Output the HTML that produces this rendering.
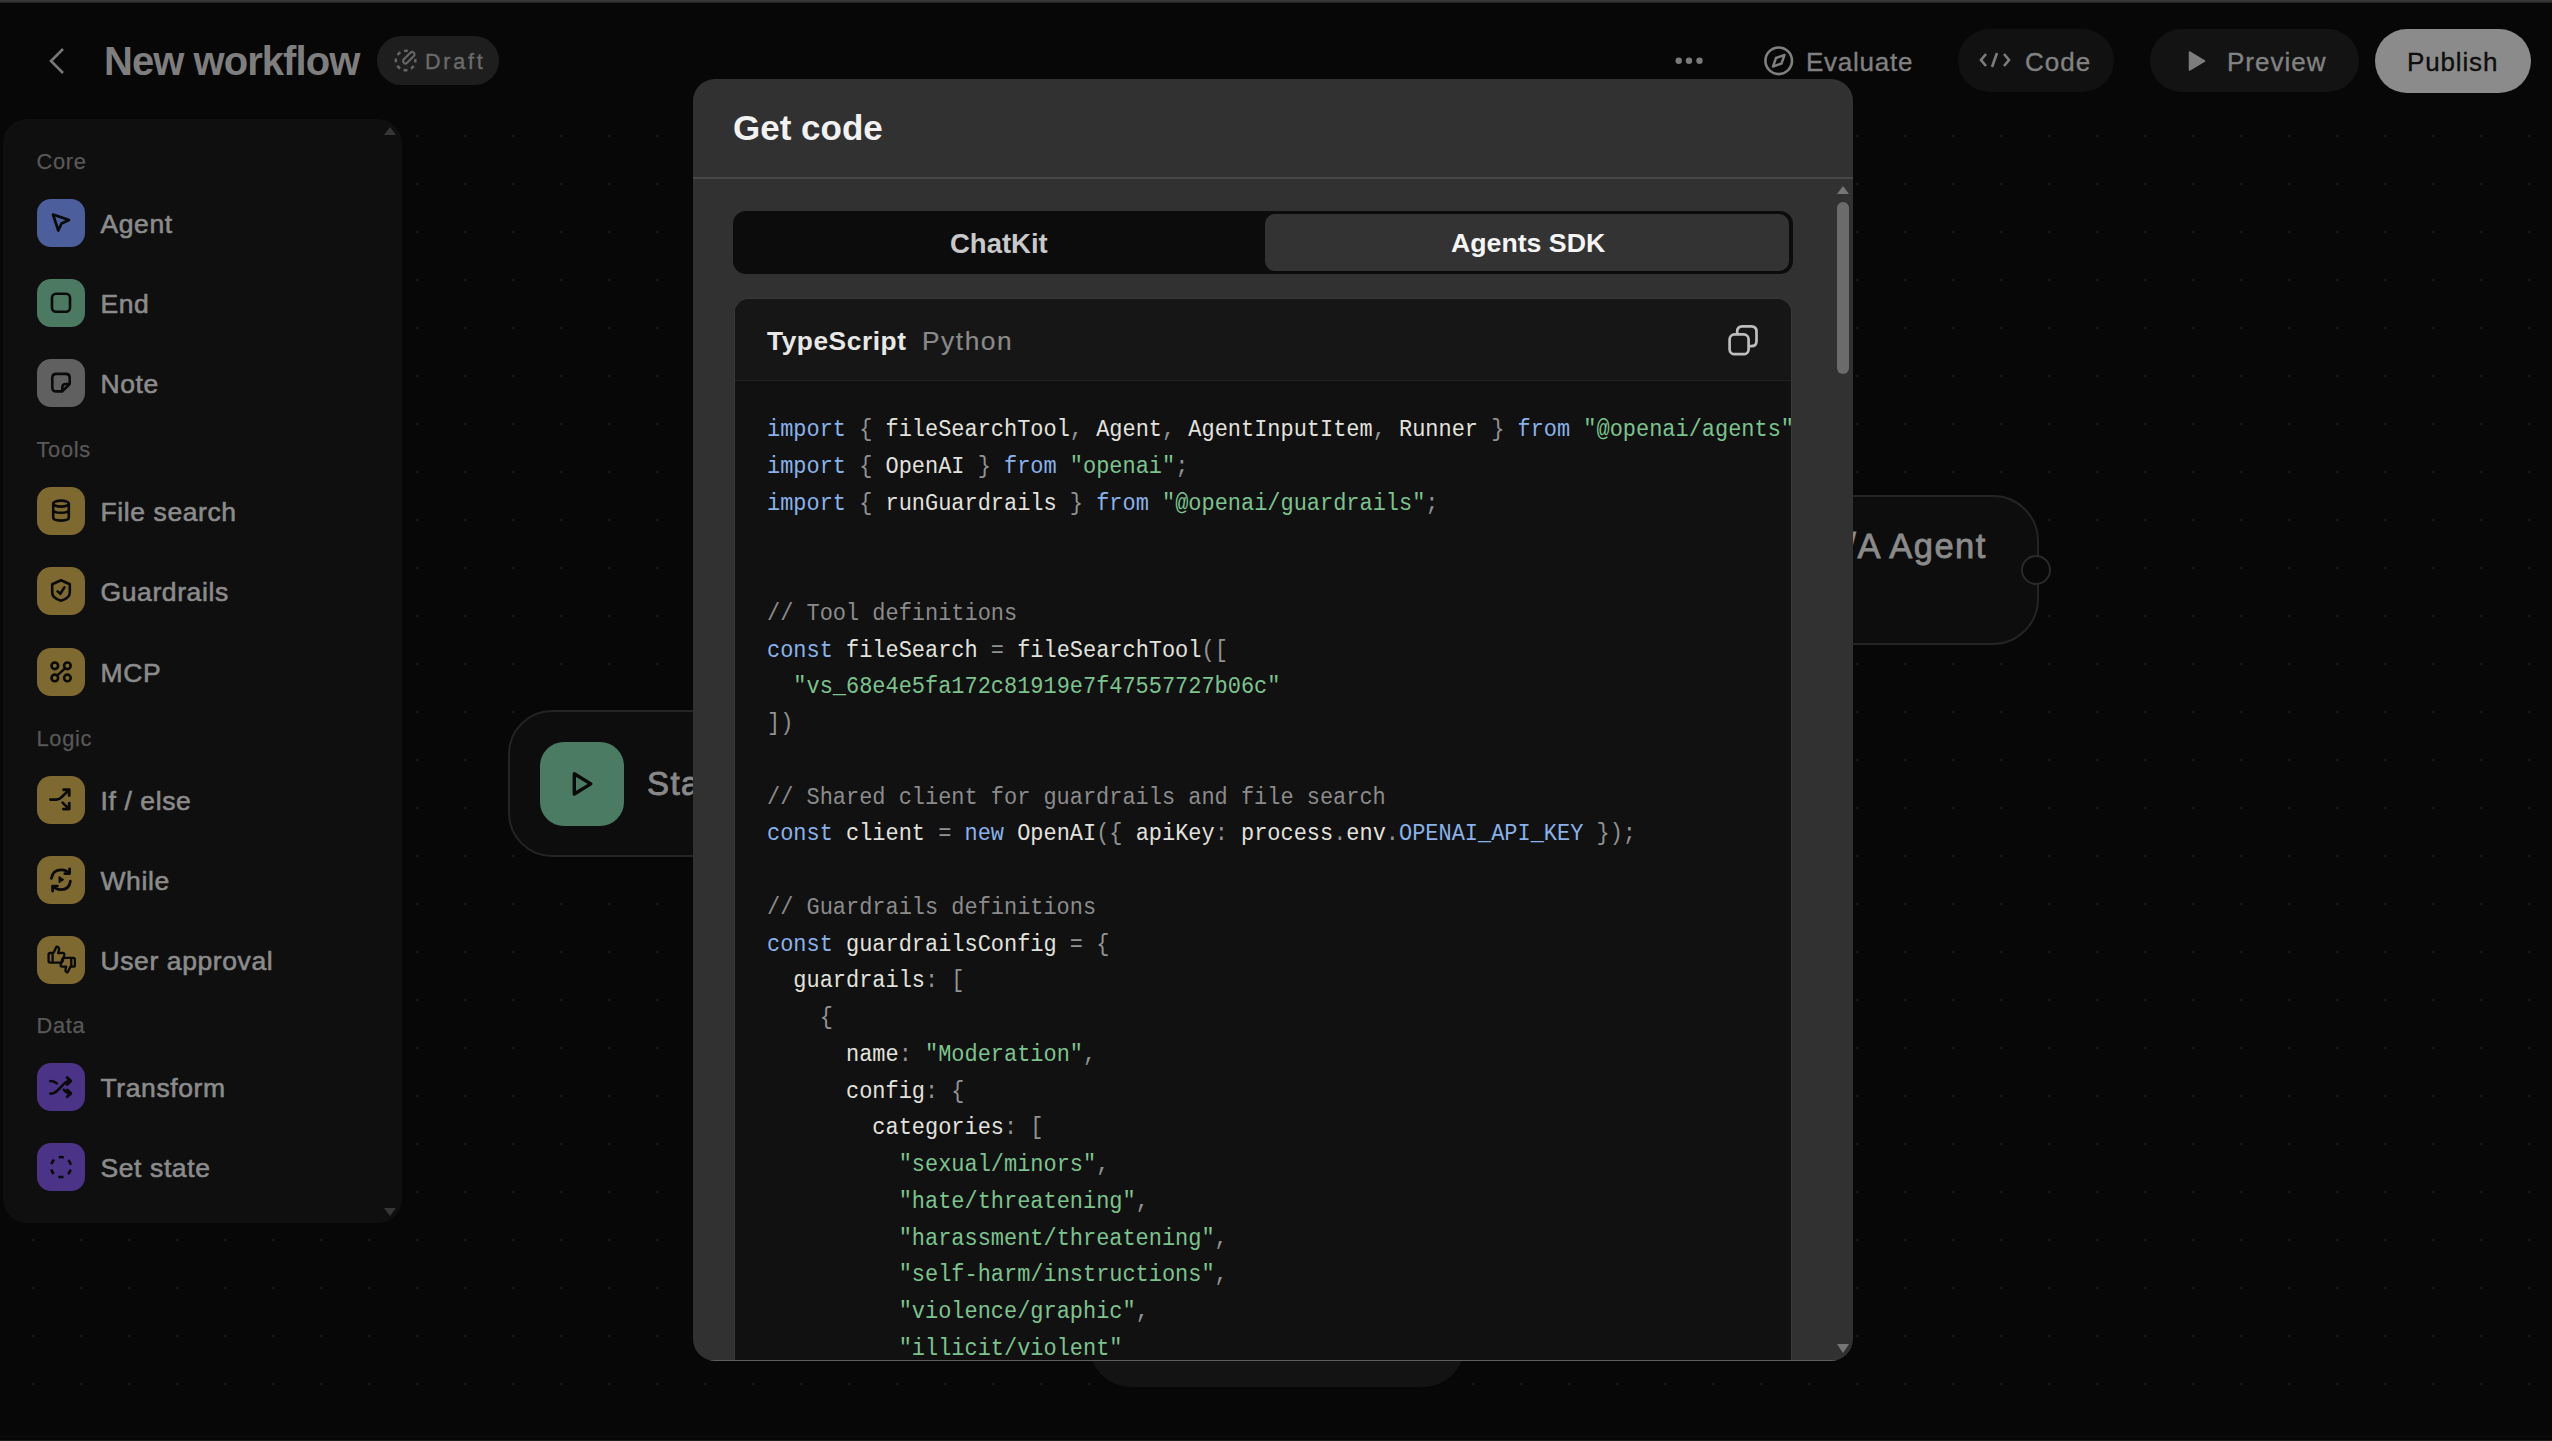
<!DOCTYPE html>
<html><head><meta charset="utf-8">
<style>
html,body{margin:0;padding:0;width:2552px;height:1441px;overflow:hidden;background:#070707;font-family:"Liberation Sans",sans-serif;}
.a{position:absolute;white-space:pre;line-height:1;}
#canvas{position:absolute;left:0;top:112px;width:2552px;height:1298px;background-image:radial-gradient(circle,#181818 0,#181818 1.1px,transparent 1.7px);background-size:48px 48px;background-position:9px 0px;}
#botline1{position:absolute;left:0;top:1436px;width:2552px;height:1px;background:#0e0e0e;}
#botline2{position:absolute;left:0;top:1440px;width:2552px;height:1px;background:#1e1e1e;}
.med{-webkit-text-stroke:0.35px currentColor;}
#topstrip{position:absolute;left:0;top:0;width:2552px;height:3px;background:linear-gradient(#3f3f3f,#2e2e2e 50%,#242424);}
.pill{position:absolute;border-radius:40px;}
#sidebar{position:absolute;left:2.5px;top:118.5px;width:399px;height:1104.5px;border-radius:24px;background:#0f0f0f;}
.sh{position:absolute;white-space:pre;line-height:1;left:34px;font-size:21.8px;color:#585858;letter-spacing:0.7px;-webkit-text-stroke:0.25px #585858;}
.item{position:absolute;left:34px;height:48px;}
.ic{position:absolute;left:0;top:0;width:48px;height:48px;border-radius:14px;}
.ic svg{position:absolute;left:0;top:0;}
.it{position:absolute;white-space:pre;line-height:1;left:64px;font-size:26.5px;color:#8b8b8b;letter-spacing:0.6px;-webkit-text-stroke:0.6px #8b8b8b;}
.blue{background:#4c5e9c}.green{background:#4c7962}.grey{background:#606060}.gold{background:#7e6a30}.purple{background:#4b3487}
#modal{position:absolute;left:693px;top:79px;width:1160px;height:1282px;border-radius:22px;background:#313131;overflow:hidden;}
#code{position:absolute;left:42px;top:220px;width:1056px;height:1200px;border-radius:14px 14px 0 0;background:#111111;overflow:hidden;box-shadow:0 0 0 1px #383838;}
#codehead{position:absolute;left:0;top:0;width:1056px;height:81px;background:#161616;border-bottom:1px solid #222;}
pre{margin:0;position:absolute;left:32px;top:114px;font-family:"Liberation Mono",monospace;font-size:21.94px;line-height:34.981px;color:#e2e2de;transform:scaleY(1.05);transform-origin:0 0;}
.k{color:#89b2ea}.s{color:#7cc38e}.c{color:#8b8b8b}.p{color:#929292}
</style></head>
<body>
<div id="canvas"></div>
<div id="topstrip"></div>
<div id="botline1"></div><div id="botline2"></div>

<!-- header left -->
<svg class="a" style="left:46px;top:45px" width="22" height="32" viewBox="0 0 22 32"><polyline points="17,4 5,16 17,28" fill="none" stroke="#777" stroke-width="2.6" stroke-linecap="butt" stroke-linejoin="miter"/></svg>
<div class="a" style="left:104px;top:41px;font-size:40px;font-weight:700;color:#7e7e7e;letter-spacing:-0.95px;">New workflow</div>
<div class="pill" style="left:377px;top:36px;width:122px;height:49px;background:#1e1e1e;"></div>
<svg class="a" style="left:390px;top:44px" width="32" height="32" viewBox="0 0 32 32"><circle cx="15.6" cy="16.5" r="9.75" fill="none" stroke="#666" stroke-width="2.5" stroke-dasharray="3.9 3.76" stroke-dashoffset="1.95" stroke-linecap="butt"/><rect x="-2.4" y="-7.1" width="4.8" height="14.2" rx="2.4" transform="translate(18.8 13.7) rotate(45)" fill="#1e1e1e" stroke="#666" stroke-width="2.1"/></svg>
<div class="a" style="left:425px;top:52px;font-size:21.5px;color:#6b6b6b;letter-spacing:2.8px;-webkit-text-stroke:0.35px #6b6b6b;">Draft</div>

<!-- header right -->
<svg class="a" style="left:1670px;top:52px" width="40" height="18"><circle cx="8.7" cy="8.8" r="3.2" fill="#7a7a7a"/><circle cx="19" cy="8.8" r="3.2" fill="#7a7a7a"/><circle cx="29.5" cy="8.8" r="3.2" fill="#7a7a7a"/></svg>
<svg class="a" style="left:1762px;top:44px" width="34" height="34" viewBox="0 0 34 34"><circle cx="16.7" cy="16.8" r="13.3" fill="none" stroke="#7f7f7f" stroke-width="2.6"/><path d="M22.5 11 L19.5 19.5 L11 22.5 L14 14 Z" fill="none" stroke="#7f7f7f" stroke-width="2.4" stroke-linejoin="round"/></svg>
<div class="a" style="left:1806px;top:49px;font-size:26px;color:#808080;letter-spacing:0.75px;-webkit-text-stroke:0.35px #808080;">Evaluate</div>

<div class="pill" style="left:1958px;top:29px;width:156px;height:63px;background:#111111;"></div>
<svg class="a" style="left:1978px;top:50px" width="34" height="20" viewBox="0 0 34 20"><polyline points="8,4 3,10 8,16" fill="none" stroke="#7d7d7d" stroke-width="2.6"/><line x1="19" y1="3" x2="14" y2="17" stroke="#7d7d7d" stroke-width="2.6"/><polyline points="26,4 31,10 26,16" fill="none" stroke="#7d7d7d" stroke-width="2.6"/></svg>
<div class="a" style="left:2025px;top:49px;font-size:26px;color:#828282;letter-spacing:1px;-webkit-text-stroke:0.35px #828282;">Code</div>

<div class="pill" style="left:2150px;top:29px;width:209px;height:63px;background:#131313;"></div>
<svg class="a" style="left:2186px;top:49px" width="22" height="24" viewBox="0 0 22 24"><path d="M3.5 3 L18.5 12 L3.5 21 Z" fill="#7d7d7d" stroke="#7d7d7d" stroke-width="1.5" stroke-linejoin="round"/></svg>
<div class="a" style="left:2227px;top:49px;font-size:26px;color:#828282;letter-spacing:1px;-webkit-text-stroke:0.35px #828282;">Preview</div>

<div class="pill" style="left:2375px;top:29px;width:156px;height:64px;background:#8b8b8b;"></div>
<div class="a" style="left:2407px;top:49px;font-size:26px;color:#0e0e0e;letter-spacing:0.85px;-webkit-text-stroke:0.35px #0e0e0e;">Publish</div>

<!-- sidebar -->
<div id="sidebar">
  <svg class="a" style="left:380px;top:6px" width="14" height="12"><path d="M1 10 L7 2 L13 10 Z" fill="#363636"/></svg>
  <svg class="a" style="left:380px;top:1087px" width="14" height="12"><path d="M1 2 L7 10 L13 2 Z" fill="#363636"/></svg>
  <div class="sh" style="top:32.8px">Core</div>
  <div class="item" style="top:80px"><div class="ic blue"><svg width="48" height="48" viewBox="0 0 48 48"><path d="M16 15.5 L32 21 L24.5 24.5 L21.3 31.5 Z" stroke="#0a0a0a" fill="none" stroke-linecap="round" stroke-linejoin="round" stroke-width="2.7"/></svg></div><div class="it" style="top:12px">Agent</div></div>
  <div class="item" style="top:160px"><div class="ic green"><svg width="48" height="48" viewBox="0 0 48 48"><rect x="15" y="14.8" width="18" height="18" rx="4" stroke="#0a0a0a" fill="none" stroke-linecap="round" stroke-linejoin="round" stroke-width="2.6"/></svg></div><div class="it" style="top:12px">End</div></div>
  <div class="item" style="top:240px"><div class="ic grey"><svg width="48" height="48" viewBox="0 0 48 48"><path d="M19.3 14.9 H28.7 Q32.7 14.9 32.7 18.9 V25 L25.3 32.4 H19.3 Q15.3 32.4 15.3 28.4 V18.9 Q15.3 14.9 19.3 14.9 Z M25.3 32.4 V28.5 Q25.3 25 28.8 25 H32.7" stroke="#0a0a0a" fill="none" stroke-linecap="round" stroke-linejoin="round" stroke-width="2.6"/></svg></div><div class="it" style="top:12px">Note</div></div>

  <div class="sh" style="top:320.8px">Tools</div>
  <div class="item" style="top:368px"><div class="ic gold"><svg width="48" height="48" viewBox="0 0 48 48"><ellipse cx="24" cy="16.6" rx="7.8" ry="3" stroke="#0a0a0a" fill="none" stroke-linecap="round" stroke-linejoin="round" stroke-width="2.6"/><path d="M16.2 16.6 V30.6 Q16.2 33.6 24 33.6 Q31.8 33.6 31.8 30.6 V16.6 M16.2 22.5 Q16.2 25.8 24 25.8 Q31.8 25.8 31.8 22.5" stroke="#0a0a0a" fill="none" stroke-linecap="round" stroke-linejoin="round" stroke-width="2.6"/></svg></div><div class="it" style="top:12px">File search</div></div>
  <div class="item" style="top:448px"><div class="ic gold"><svg width="48" height="48" viewBox="0 0 48 48"><path d="M24 13.3 L32.8 17.3 V25.5 Q32.8 31 24 33.8 Q15.2 31 15.2 25.5 V17.3 Z" stroke="#0a0a0a" fill="none" stroke-linecap="round" stroke-linejoin="round" stroke-width="2.6"/><path d="M20.6 24.4 L23.3 26.8 L27.4 20.4" stroke="#0a0a0a" fill="none" stroke-linecap="round" stroke-linejoin="round" stroke-width="2.6"/></svg></div><div class="it" style="top:12px">Guardrails</div></div>
  <div class="item" style="top:529px"><div class="ic gold"><svg width="48" height="48" viewBox="0 0 48 48"><circle cx="17.8" cy="17.8" r="3.3" stroke="#0a0a0a" fill="none" stroke-linecap="round" stroke-linejoin="round" stroke-width="2.6"/><circle cx="30.4" cy="17.8" r="3.3" stroke="#0a0a0a" fill="none" stroke-linecap="round" stroke-linejoin="round" stroke-width="2.6"/><circle cx="17.8" cy="29.9" r="3.3" stroke="#0a0a0a" fill="none" stroke-linecap="round" stroke-linejoin="round" stroke-width="2.6"/><circle cx="30.4" cy="29.9" r="3.3" stroke="#0a0a0a" fill="none" stroke-linecap="round" stroke-linejoin="round" stroke-width="2.6"/><path d="M28 20.3 L20.3 27.4" stroke="#0a0a0a" fill="none" stroke-linecap="round" stroke-linejoin="round" stroke-width="2.4"/></svg></div><div class="it" style="top:12px">MCP</div></div>

  <div class="sh" style="top:609.8px">Logic</div>
  <div class="item" style="top:657px"><div class="ic gold"><svg width="48" height="48" viewBox="0 0 48 48"><path d="M13.4 23.6 H19.5 Q22.5 23.6 24.5 21.2 L31.6 14.4" stroke="#0a0a0a" fill="none" stroke-linecap="round" stroke-linejoin="round" stroke-width="2.7"/><path d="M26.6 13.8 H32.2 V19.6" stroke="#0a0a0a" fill="none" stroke-linecap="round" stroke-linejoin="round" stroke-width="2.9"/><path d="M25.6 26.6 L31.6 32.6" stroke="#0a0a0a" fill="none" stroke-linecap="round" stroke-linejoin="round" stroke-width="2.7"/><path d="M32.2 27.3 V33.1 H26.4" stroke="#0a0a0a" fill="none" stroke-linecap="round" stroke-linejoin="round" stroke-width="2.9"/></svg></div><div class="it" style="top:12px">If / else</div></div>
  <div class="item" style="top:737px"><div class="ic gold"><svg width="48" height="48" viewBox="0 0 48 48"><path d="M14.4 22.4 Q15.6 13.8 24.4 13.8 Q29.4 13.8 32.2 17.2" stroke="#0a0a0a" fill="none" stroke-linecap="round" stroke-linejoin="round" stroke-width="2.7"/><path d="M32.6 12.8 V17.6 H27.8" stroke="#0a0a0a" fill="none" stroke-linecap="round" stroke-linejoin="round" stroke-width="2.8"/><path d="M33.4 25 Q32.4 33.6 24 33.6 Q19 33.6 16 30.4" stroke="#0a0a0a" fill="none" stroke-linecap="round" stroke-linejoin="round" stroke-width="2.7"/><path d="M15.6 35 V30.2 H20.4" stroke="#0a0a0a" fill="none" stroke-linecap="round" stroke-linejoin="round" stroke-width="2.8"/><path d="M22 20.6 L26.8 23.7 L22 26.8 Z" fill="#0a0a0a" stroke="#0a0a0a" stroke-width="1" stroke-linejoin="round"/></svg></div><div class="it" style="top:12px">While</div></div>
  <div class="item" style="top:817px"><div class="ic gold"><svg width="48" height="48" viewBox="0 0 48 48"><g transform="translate(10,9) scale(0.8)"><path d="M7 10v12 M15 5.88 14 10h5.83a2 2 0 0 1 1.92 2.56l-2.33 8A2 2 0 0 1 17.5 22H4a2 2 0 0 1-2-2v-8a2 2 0 0 1 2-2h2.76a2 2 0 0 0 1.79-1.11L12 2a3.13 3.13 0 0 1 3 3.88Z" stroke="#0a0a0a" fill="none" stroke-linecap="round" stroke-linejoin="round" stroke-width="2.9"/></g><g transform="translate(22,20.5) scale(0.72)"><path d="M17 14V2 M9 18.12 10 14H4.17a2 2 0 0 1-1.92-2.56l2.33-8A2 2 0 0 1 6.5 2H20a2 2 0 0 1 2 2v8a2 2 0 0 1-2 2h-2.76a2 2 0 0 0-1.79 1.11L12 22a3.13 3.13 0 0 1-3-3.88Z" stroke="#0a0a0a" fill="none" stroke-linecap="round" stroke-linejoin="round" stroke-width="3.2"/></g></svg></div><div class="it" style="top:12px">User approval</div></div>

  <div class="sh" style="top:896.8px">Data</div>
  <div class="item" style="top:944px"><div class="ic purple"><svg width="48" height="48" viewBox="0 0 48 48"><path d="M13.4 30.6 Q17.6 30.6 20.6 27.4 L27.2 20.6 Q29.6 18 33.6 18" stroke="#0a0a0a" fill="none" stroke-linecap="round" stroke-linejoin="round" stroke-width="2.7"/><path d="M30.2 14.6 L33.8 18 L30.2 21.4" stroke="#0a0a0a" fill="none" stroke-linecap="round" stroke-linejoin="round" stroke-width="2.9"/><path d="M13.4 18 Q17.4 18 19.8 20.4" stroke="#0a0a0a" fill="none" stroke-linecap="round" stroke-linejoin="round" stroke-width="2.7"/><path d="M26.8 26.8 Q29.4 30.4 33.6 30.4" stroke="#0a0a0a" fill="none" stroke-linecap="round" stroke-linejoin="round" stroke-width="2.7"/><path d="M30.2 27 L33.8 30.4 L30.2 33.8" stroke="#0a0a0a" fill="none" stroke-linecap="round" stroke-linejoin="round" stroke-width="2.9"/></svg></div><div class="it" style="top:12px">Transform</div></div>
  <div class="item" style="top:1024px"><div class="ic purple"><svg width="48" height="48" viewBox="0 0 48 48"><circle cx="24" cy="24" r="10" fill="none" stroke="#0a0a0a" stroke-width="2.6" stroke-dasharray="5.2 5.27" stroke-dashoffset="-2.64"/></svg></div><div class="it" style="top:12px">Set state</div></div>
</div>

<!-- canvas nodes -->
<div class="a" style="left:507.5px;top:709.5px;width:400px;height:143px;border:2.5px solid #242424;border-radius:44px;background:#0d0d0d;"></div>
<div class="a" style="left:540px;top:742px;width:84px;height:84px;border-radius:24px;background:#4b7b63;"></div>
<svg class="a" style="left:560px;top:762px" width="44" height="44" viewBox="0 0 44 44"><path d="M14.3 11.8 L30.8 21.9 L14.3 32 Z" fill="none" stroke="#0a0a0a" stroke-width="3.4" stroke-linejoin="round"/></svg>
<div class="a" style="left:647px;top:767px;font-size:33px;color:#888;letter-spacing:1.4px;-webkit-text-stroke:0.9px #888;">Start</div>

<div class="a" style="left:1700px;top:494.5px;width:335px;height:146px;border:2.5px solid #242424;border-radius:46px;background:#0d0d0d;"></div>
<div class="a" style="left:1818px;top:529px;font-size:34.5px;color:#8a8a8a;letter-spacing:1.5px;-webkit-text-stroke:0.85px #8a8a8a;">Q/A Agent</div>
<div class="a" style="left:2021px;top:555px;width:26px;height:26px;border-radius:50%;border:2.5px solid #2a2a2a;background:#080808;"></div>

<div class="a" style="left:1089px;top:1280px;width:376px;height:107px;border-radius:42px;background:#131313;"></div>

<!-- modal -->
<div id="modal">
  <div class="a" style="left:40px;top:31px;font-size:35px;font-weight:700;color:#f2f2f2;">Get code</div>
  <div class="a" style="left:0;top:98px;width:1160px;height:1.5px;background:#474747;"></div>
  <div class="a" style="left:40px;top:131.5px;width:1060px;height:63.5px;border-radius:13px;background:#0c0c0c;"></div>
  <div class="a" style="left:572px;top:134.5px;width:524px;height:57.5px;border-radius:10px;background:#333333;"></div>
  <div class="a" style="left:257px;top:151px;font-size:27.5px;font-weight:700;color:#c9c9c9;">ChatKit</div>
  <div class="a" style="left:758px;top:151px;font-size:26.7px;font-weight:700;color:#f5f5f5;">Agents SDK</div>

  <div id="code">
    <div id="codehead"></div>
    <div class="a" style="left:32px;top:29px;font-size:26.3px;font-weight:700;color:#e8e8e6;letter-spacing:0.55px;">TypeScript</div>
    <div class="a" style="left:187px;top:29px;font-size:26.3px;color:#8a8a8a;letter-spacing:1.55px;-webkit-text-stroke:0.2px #8a8a8a;">Python</div>
    <svg class="a" style="left:990px;top:24px" width="36" height="36" viewBox="0 0 36 36"><rect x="4.6" y="11.4" width="19" height="19.8" rx="5" fill="none" stroke="#bdbdbd" stroke-width="2.7"/><path d="M12.2 11.4 V8.6 Q12.2 3.4 17.4 3.4 H26.3 Q31.5 3.4 31.5 8.6 V18 Q31.5 23.2 26.3 23.2 H23.6" fill="none" stroke="#bdbdbd" stroke-width="2.7"/></svg>
<pre><span class="k">import</span> <span class="p">{</span> fileSearchTool<span class="p">,</span> Agent<span class="p">,</span> AgentInputItem<span class="p">,</span> Runner <span class="p">}</span> <span class="k">from</span> <span class="s">"@openai/agents"</span><span class="p">;</span>
<span class="k">import</span> <span class="p">{</span> OpenAI <span class="p">}</span> <span class="k">from</span> <span class="s">"openai"</span><span class="p">;</span>
<span class="k">import</span> <span class="p">{</span> runGuardrails <span class="p">}</span> <span class="k">from</span> <span class="s">"@openai/guardrails"</span><span class="p">;</span>


<span class="c">// Tool definitions</span>
<span class="k">const</span> fileSearch <span class="p">=</span> fileSearchTool<span class="p">([</span>
  <span class="s">"vs_68e4e5fa172c81919e7f47557727b06c"</span>
<span class="p">])</span>

<span class="c">// Shared client for guardrails and file search</span>
<span class="k">const</span> client <span class="p">=</span> <span class="k">new</span> OpenAI<span class="p">({</span> apiKey<span class="p">:</span> process<span class="p">.</span>env<span class="p">.</span><span class="k">OPENAI_API_KEY</span> <span class="p">});</span>

<span class="c">// Guardrails definitions</span>
<span class="k">const</span> guardrailsConfig <span class="p">=</span> <span class="p">{</span>
  guardrails<span class="p">:</span> <span class="p">[</span>
    <span class="p">{</span>
      name<span class="p">:</span> <span class="s">"Moderation"</span><span class="p">,</span>
      config<span class="p">:</span> <span class="p">{</span>
        categories<span class="p">:</span> <span class="p">[</span>
          <span class="s">"sexual/minors"</span><span class="p">,</span>
          <span class="s">"hate/threatening"</span><span class="p">,</span>
          <span class="s">"harassment/threatening"</span><span class="p">,</span>
          <span class="s">"self-harm/instructions"</span><span class="p">,</span>
          <span class="s">"violence/graphic"</span><span class="p">,</span>
          <span class="s">"illicit/violent"</span>
</pre>
  </div>

  <!-- scrollbar -->
  <svg class="a" style="left:1143px;top:104px" width="14" height="12"><path d="M1 11 L7 3 L13 11 Z" fill="#767676"/></svg>
  <div class="a" style="left:1144px;top:123px;width:12px;height:172px;border-radius:6px;background:#6b6b6b;"></div>
  <svg class="a" style="left:1143px;top:1264px" width="14" height="12"><path d="M1 1 L7 10 L13 1 Z" fill="#767676"/></svg>
  <div class="a" style="left:0;top:1280.5px;width:1160px;height:1.5px;background:#5e5e5e;"></div>
</div>
</body></html>
